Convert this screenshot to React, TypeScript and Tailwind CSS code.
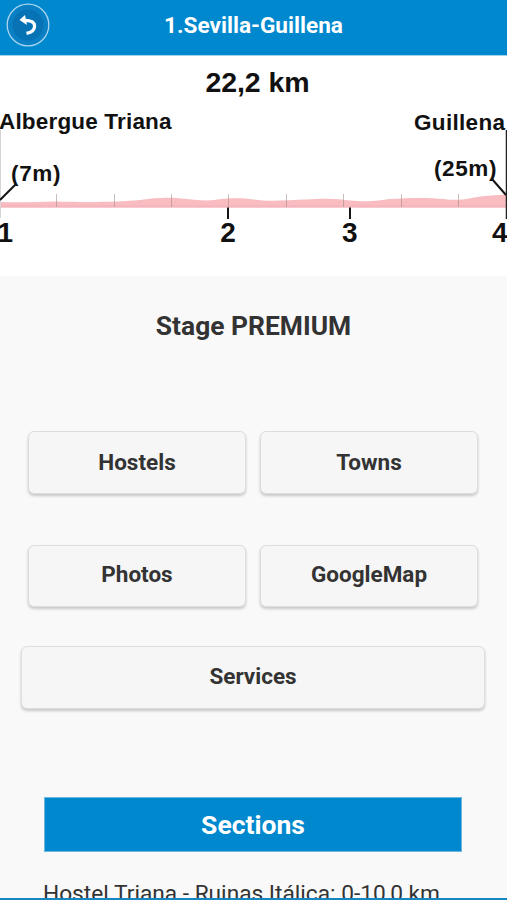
type StageButtonProps = {
  label: string;
  className?: string;
};

function StageButton({ label, className = "" }: StageButtonProps) {
  return (
    <button
      type="button"
      className={`flex items-center justify-center rounded-[6px] border border-[#dddddd] bg-[#f6f6f6] text-[22.5px] font-bold text-[#333333] shadow-[0_2px_3px_rgba(0,0,0,0.2)] ${className}`}
    >
      {label}
    </button>
  );
}

function BackIcon() {
  return (
    <svg width="44" height="44" viewBox="0 0 44 44" aria-hidden="true">
      <circle cx="22" cy="22" r="20.8" fill="#0a7fc4" stroke="#a9d5ee" strokeWidth="1.3" />
      <circle cx="22" cy="22" r="15.5" fill="#0773b5" />
      <path d="M13.5 17L19 12L21 22Z" fill="#fff" />
      <path
        d="M18.5 17.3C25 17.3 28.6 19.3 28.6 23C28.6 26.8 25.8 29.4 20.5 30.4"
        fill="none"
        stroke="#fff"
        strokeWidth="3.2"
      />
    </svg>
  );
}

const TICKS = [56.5, 114.5, 171.5, 228.5, 286.5, 343.5, 401.5, 458.5];

function ElevationProfile() {
  return (
    <svg
      viewBox="0 56 507 220"
      className="block h-[220px] w-[507px] bg-white font-['Liberation_Sans',Arial,sans-serif] font-bold"
      fill="#111"
    >
      <path
        d="M0 202C20 203 38 201.500 56 201.500C90 202.500 120 202 140 200C154 198 164 197.500 176 198C190 199 204 201.500 214 200C226 198 242 197.500 254 199.500C270 202 288 200 306 199.500C328 198 338 199 350 200.500C370 202.500 380 200 390 199C410 197.500 430 197.500 444 199C460 201 466 199 474 197.500C486 195.500 496 195 506 194.500V207.500H0Z"
        fill="#f8bcc1"
      />
      <path d="M0 205H506V207.500H0Z" fill="#f6b6bd" />
      {TICKS.map((x) => (
        <path key={x} d={`M${x} 194V207`} stroke="#9b8b82" strokeOpacity="0.55" />
      ))}
      <path d="M0.500 130V218" stroke="#d5d5d5" />
      <path d="M506.500 130V219" stroke="#222" strokeWidth="1.500" />
      <path d="M0 200L16 184M228 207.500V219M350 207.500V219M492 179L506 195" stroke="#151515" strokeWidth="2" fill="none" />
      <text x="205.500" y="92" fontSize="28.500" textLength="104">22,2 km</text>
      <text x="-1" y="129" fontSize="22.500" textLength="172.500">Albergue Triana</text>
      <text x="414" y="130" fontSize="22.500" textLength="91">Guillena</text>
      <text x="11" y="181" fontSize="22.500" textLength="49.500">(7m)</text>
      <text x="434" y="176" fontSize="22.500" textLength="62.500">(25m)</text>
      <text x="-2.500" y="242" fontSize="28">1</text>
      <text x="220.200" y="242" fontSize="28">2</text>
      <text x="342" y="242" fontSize="28">3</text>
      <text x="492" y="241.500" fontSize="28">4</text>
    </svg>
  );
}

export default function App() {
  return (
    <div className="flex h-[900px] w-[507px] flex-col overflow-hidden bg-[#f9f9f9] font-[Roboto,sans-serif] text-[#333333]">
      <header className="grid h-14 shrink-0 grid-cols-[56px_1fr_56px] items-center border-b border-[#9fd0ec] bg-[#0088ce] pb-1.5">
        <button type="button" aria-label="Back" className="pl-1.5">
          <BackIcon />
        </button>
        <h1 className="pt-0.5 text-center text-[22.6px] font-bold leading-7 text-white">1.Sevilla-Guillena</h1>
      </header>

      <ElevationProfile />

      <main className="flex min-h-0 flex-1 flex-col overflow-hidden">
        <h2 className="mt-8 text-center text-[26.4px] font-bold leading-9">Stage PREMIUM</h2>

        <div className="mt-[87px] grid grid-cols-[218px_218px] gap-x-3.5 gap-y-[51px] px-7">
          <StageButton label="Hostels" className="h-[63px]" />
          <StageButton label="Towns" className="h-[63px]" />
          <StageButton label="Photos" className="h-[62px] pb-0.5" />
          <StageButton label="GoogleMap" className="h-[62px] pb-0.5" />
        </div>
        <StageButton label="Services" className="mt-[39px] ml-[21px] h-[63px] w-[464px] shrink-0 pb-0.5" />

        <h2 className="mt-[88px] ml-11 flex h-[55px] w-[418px] shrink-0 items-center justify-center border border-[#6db7df] bg-[#0088ce] text-[26.5px] font-bold text-white">
          Sections
        </h2>
        <div className="min-h-0 flex-1 overflow-hidden pl-[43px]">
          <p className="mt-[28px] whitespace-nowrap text-[22.7px] leading-7">
            Hostel Triana - Ruinas Itálica: 0-10,0 km
          </p>
        </div>
      </main>
      <footer className="h-0.5 shrink-0 bg-[#1686c2]" />
    </div>
  );
}
